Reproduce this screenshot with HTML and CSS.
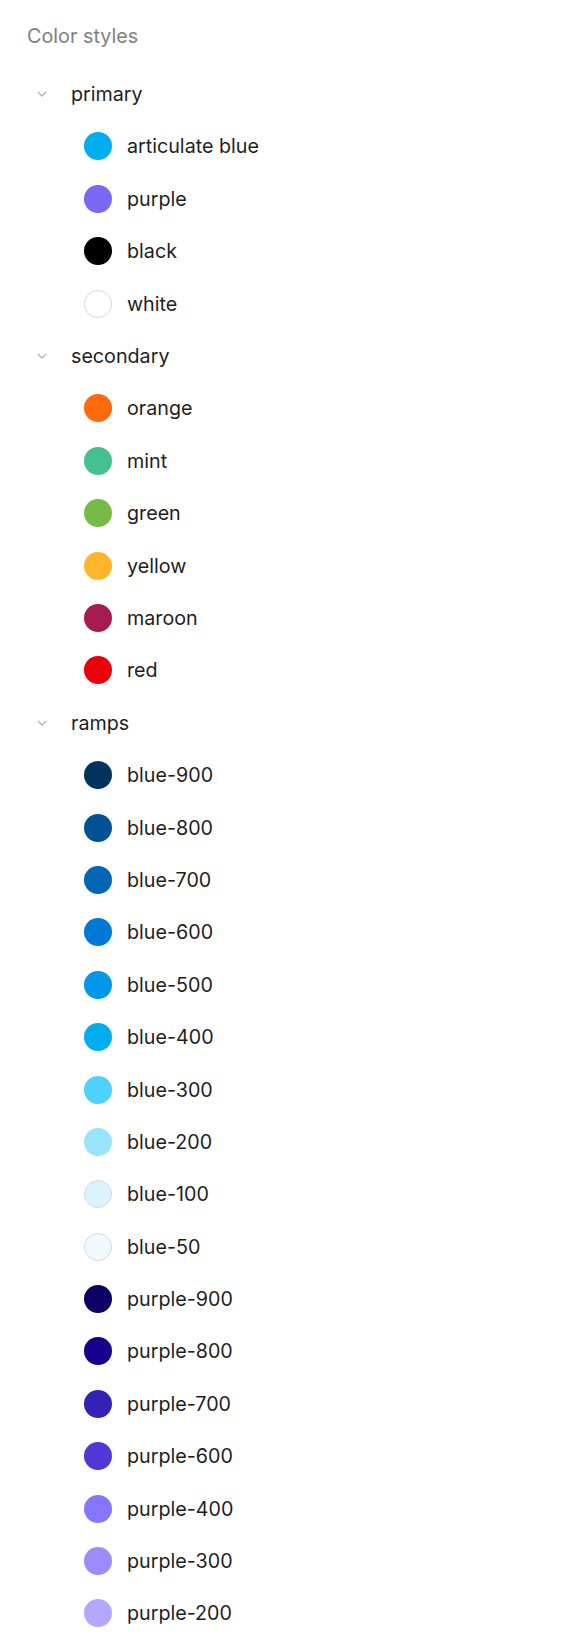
FILE: index.html
```html
<!DOCTYPE html>
<html>
<head>
<meta charset="utf-8">
<link rel="stylesheet" href="styles.css">
</head>
<body>
<div class="panel">
  <div class="title">Color styles</div>
  <div class="group">
    <div class="group-row"><svg class="chev" viewBox="0 0 12 8" width="12" height="8"><path d="M2 2 L6 6 L10 2" fill="none" stroke="#b3b3b3" stroke-width="1.4"/></svg><span>primary</span></div>
    <div class="item"><span class="sw" style="background:#00aeef"></span><span>articulate blue</span></div>
    <div class="item"><span class="sw" style="background:#7a68f2"></span><span>purple</span></div>
    <div class="item"><span class="sw" style="background:#000000"></span><span>black</span></div>
    <div class="item"><span class="sw light" style="background:#ffffff"></span><span>white</span></div>
  </div>
  <div class="group">
    <div class="group-row"><svg class="chev" viewBox="0 0 12 8" width="12" height="8"><path d="M2 2 L6 6 L10 2" fill="none" stroke="#b3b3b3" stroke-width="1.4"/></svg><span>secondary</span></div>
    <div class="item"><span class="sw" style="background:#ff6a0d"></span><span>orange</span></div>
    <div class="item"><span class="sw" style="background:#44c190"></span><span>mint</span></div>
    <div class="item"><span class="sw" style="background:#76bb45"></span><span>green</span></div>
    <div class="item"><span class="sw" style="background:#ffb52c"></span><span>yellow</span></div>
    <div class="item"><span class="sw" style="background:#a71b53"></span><span>maroon</span></div>
    <div class="item"><span class="sw" style="background:#e8000b"></span><span>red</span></div>
  </div>
  <div class="group">
    <div class="group-row"><svg class="chev" viewBox="0 0 12 8" width="12" height="8"><path d="M2 2 L6 6 L10 2" fill="none" stroke="#b3b3b3" stroke-width="1.4"/></svg><span>ramps</span></div>
    <div class="item"><span class="sw" style="background:#00345c"></span><span>blue-900</span></div>
    <div class="item"><span class="sw" style="background:#005295"></span><span>blue-800</span></div>
    <div class="item"><span class="sw" style="background:#0066b3"></span><span>blue-700</span></div>
    <div class="item"><span class="sw" style="background:#0079d6"></span><span>blue-600</span></div>
    <div class="item"><span class="sw" style="background:#0096ea"></span><span>blue-500</span></div>
    <div class="item"><span class="sw" style="background:#00aeef"></span><span>blue-400</span></div>
    <div class="item"><span class="sw" style="background:#50d0ff"></span><span>blue-300</span></div>
    <div class="item"><span class="sw" style="background:#99e4ff"></span><span>blue-200</span></div>
    <div class="item"><span class="sw light" style="background:#dcf3fc"></span><span>blue-100</span></div>
    <div class="item"><span class="sw light" style="background:#eefaff"></span><span>blue-50</span></div>
    <div class="item"><span class="sw" style="background:#0e0062"></span><span>purple-900</span></div>
    <div class="item"><span class="sw" style="background:#17008c"></span><span>purple-800</span></div>
    <div class="item"><span class="sw" style="background:#3422b6"></span><span>purple-700</span></div>
    <div class="item"><span class="sw" style="background:#4f38d6"></span><span>purple-600</span></div>
    <div class="item"><span class="sw" style="background:#8676ff"></span><span>purple-400</span></div>
    <div class="item"><span class="sw" style="background:#9b8cfa"></span><span>purple-300</span></div>
    <div class="item"><span class="sw" style="background:#b2a8ff"></span><span>purple-200</span></div>
  </div>
</div>
</body>
</html>
```
FILE: styles.css
```css
html, body {
  margin: 0;
  padding: 0;
  background: #ffffff;
}
.panel {
  font-family: Inter, "Noto Sans", sans-serif;
  color: #1e1e1e;
  padding-top: 24.5px;
}
.title {
  font-size: 19.8px;
  line-height: 22px;
  color: #808080;
  padding-left: 27px;
  margin-bottom: 21.4px;
}
.group-row, .item {
  display: flex;
  align-items: center;
  height: 52.4px;
  font-size: 19.7px;
}
.group-row {
  padding-left: 36px;
}
.chev {
  width: 12px;
  height: 8px;
  margin-right: 23px;
}
.item {
  padding-left: 84px;
}
.sw {
  width: 28px;
  height: 28px;
  border-radius: 50%;
  margin-right: 15px;
  box-sizing: border-box;
  flex: none;
}
.sw.light {
  border: 1px solid #d4dadd;
}
```
